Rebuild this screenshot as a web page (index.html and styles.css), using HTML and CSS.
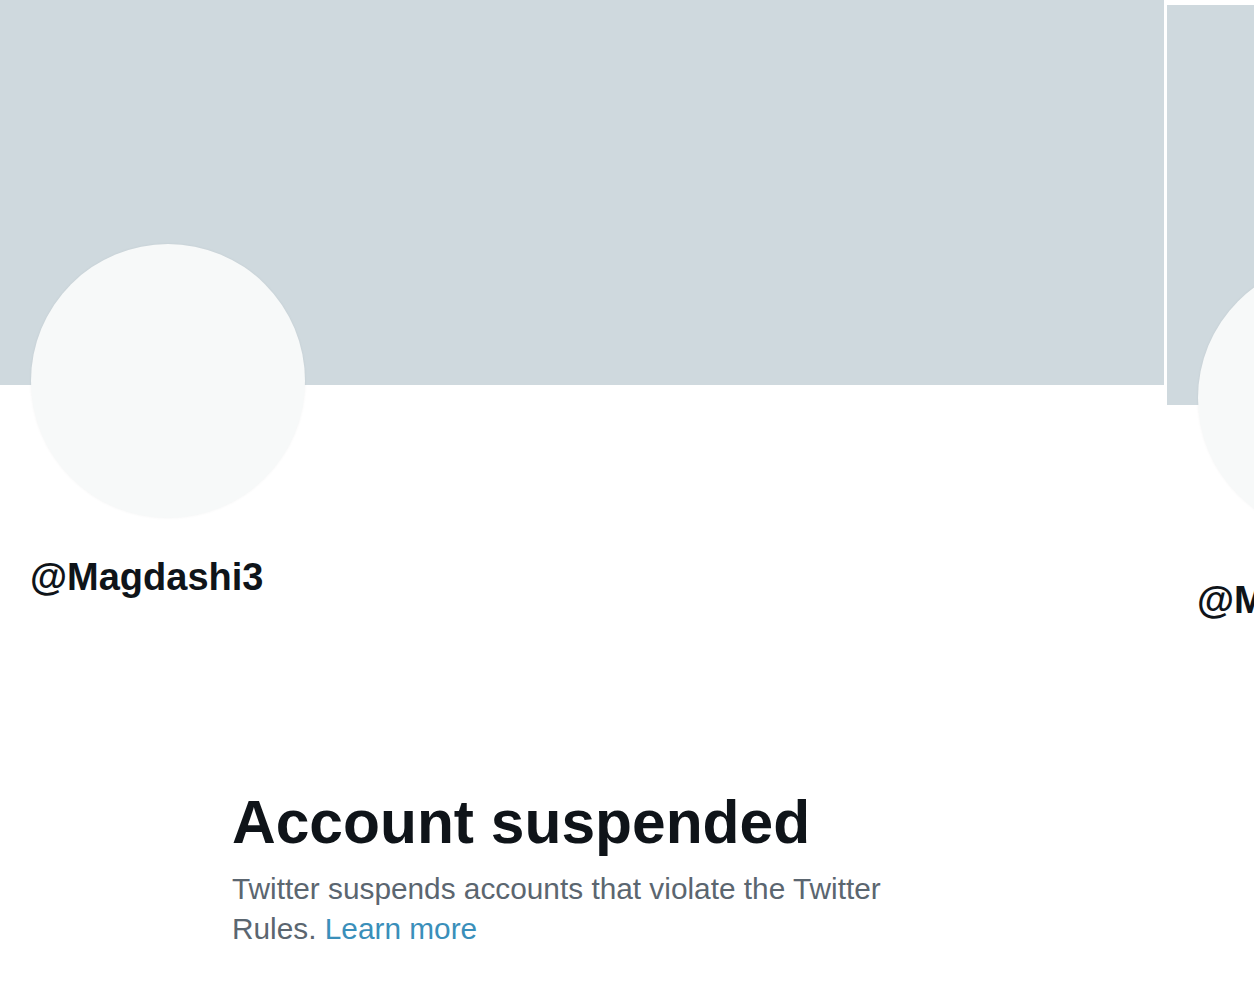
FILE: index.html
```html
<!DOCTYPE html>
<html lang="en">
<head>
<meta charset="utf-8">
<title>Account suspended</title>
<link rel="stylesheet" href="styles.css">
</head>
<body>
<div class="page">
  <div class="profiles">
    <section class="profile profile-main">
      <div class="banner"></div>
      <div class="avatar"></div>
      <div class="handle">@Magdashi3</div>
    </section>
    <section class="profile profile-next">
      <div class="banner"></div>
      <div class="avatar"></div>
      <div class="handle">@Magdashi3</div>
    </section>
  </div>
  <div class="notice">
    <h1 class="notice-title">Account suspended</h1>
    <p class="notice-text">Twitter suspends accounts that violate the Twitter Rules. <a class="notice-link" href="#">Learn more</a></p>
  </div>
</div>
</body>
</html>
```

FILE: styles.css
```css
html, body {
  margin: 0;
  padding: 0;
  background: #ffffff;
}

body {
  width: 1254px;
  height: 991px;
  overflow: hidden;
  font-family: "Liberation Sans", Arial, sans-serif;
  color: #0f1419;
}

.page {
  display: flex;
  flex-direction: column;
}

.profiles {
  display: flex;
  align-items: flex-start;
  gap: 3px;
  width: 1254px;
  overflow: hidden;
}

.profile {
  flex: 0 0 auto;
  display: flex;
  flex-direction: column;
}

.profile-main {
  width: 1164px;
}

.profile-next {
  width: 1164px;
  padding-top: 5px;
}

.banner {
  background: #cfd9de;
}

.profile-main .banner {
  height: 385px;
}

.profile-next .banner {
  height: 400px;
}

.avatar {
  width: 274px;
  height: 274px;
  border-radius: 50%;
  background: #f7f9f9;
  box-shadow: 0 0 3px rgba(0, 0, 0, 0.05);
  margin-left: 31px;
}

.profile-main .avatar {
  margin-top: -141px;
}

.profile-next .avatar {
  margin-top: -144px;
}

.handle {
  margin-left: 30px;
  font-size: 38px;
  line-height: 44px;
  font-weight: 700;
  color: #0f1419;
}

.profile-main .handle {
  margin-top: 37px;
}

.profile-next .handle {
  margin-top: 43px;
}

.notice {
  margin-left: 232px;
  margin-top: 164px;
  width: 670px;
}

.notice-title {
  margin: 0;
  font-size: 60.5px;
  line-height: 72px;
  font-weight: 700;
  color: #0f1419;
}

.notice-text {
  margin: 11px 0 0;
  font-size: 29.8px;
  line-height: 40px;
  color: #5b6670;
}

.notice-link {
  color: #3a8fba;
  text-decoration: none;
}
```
